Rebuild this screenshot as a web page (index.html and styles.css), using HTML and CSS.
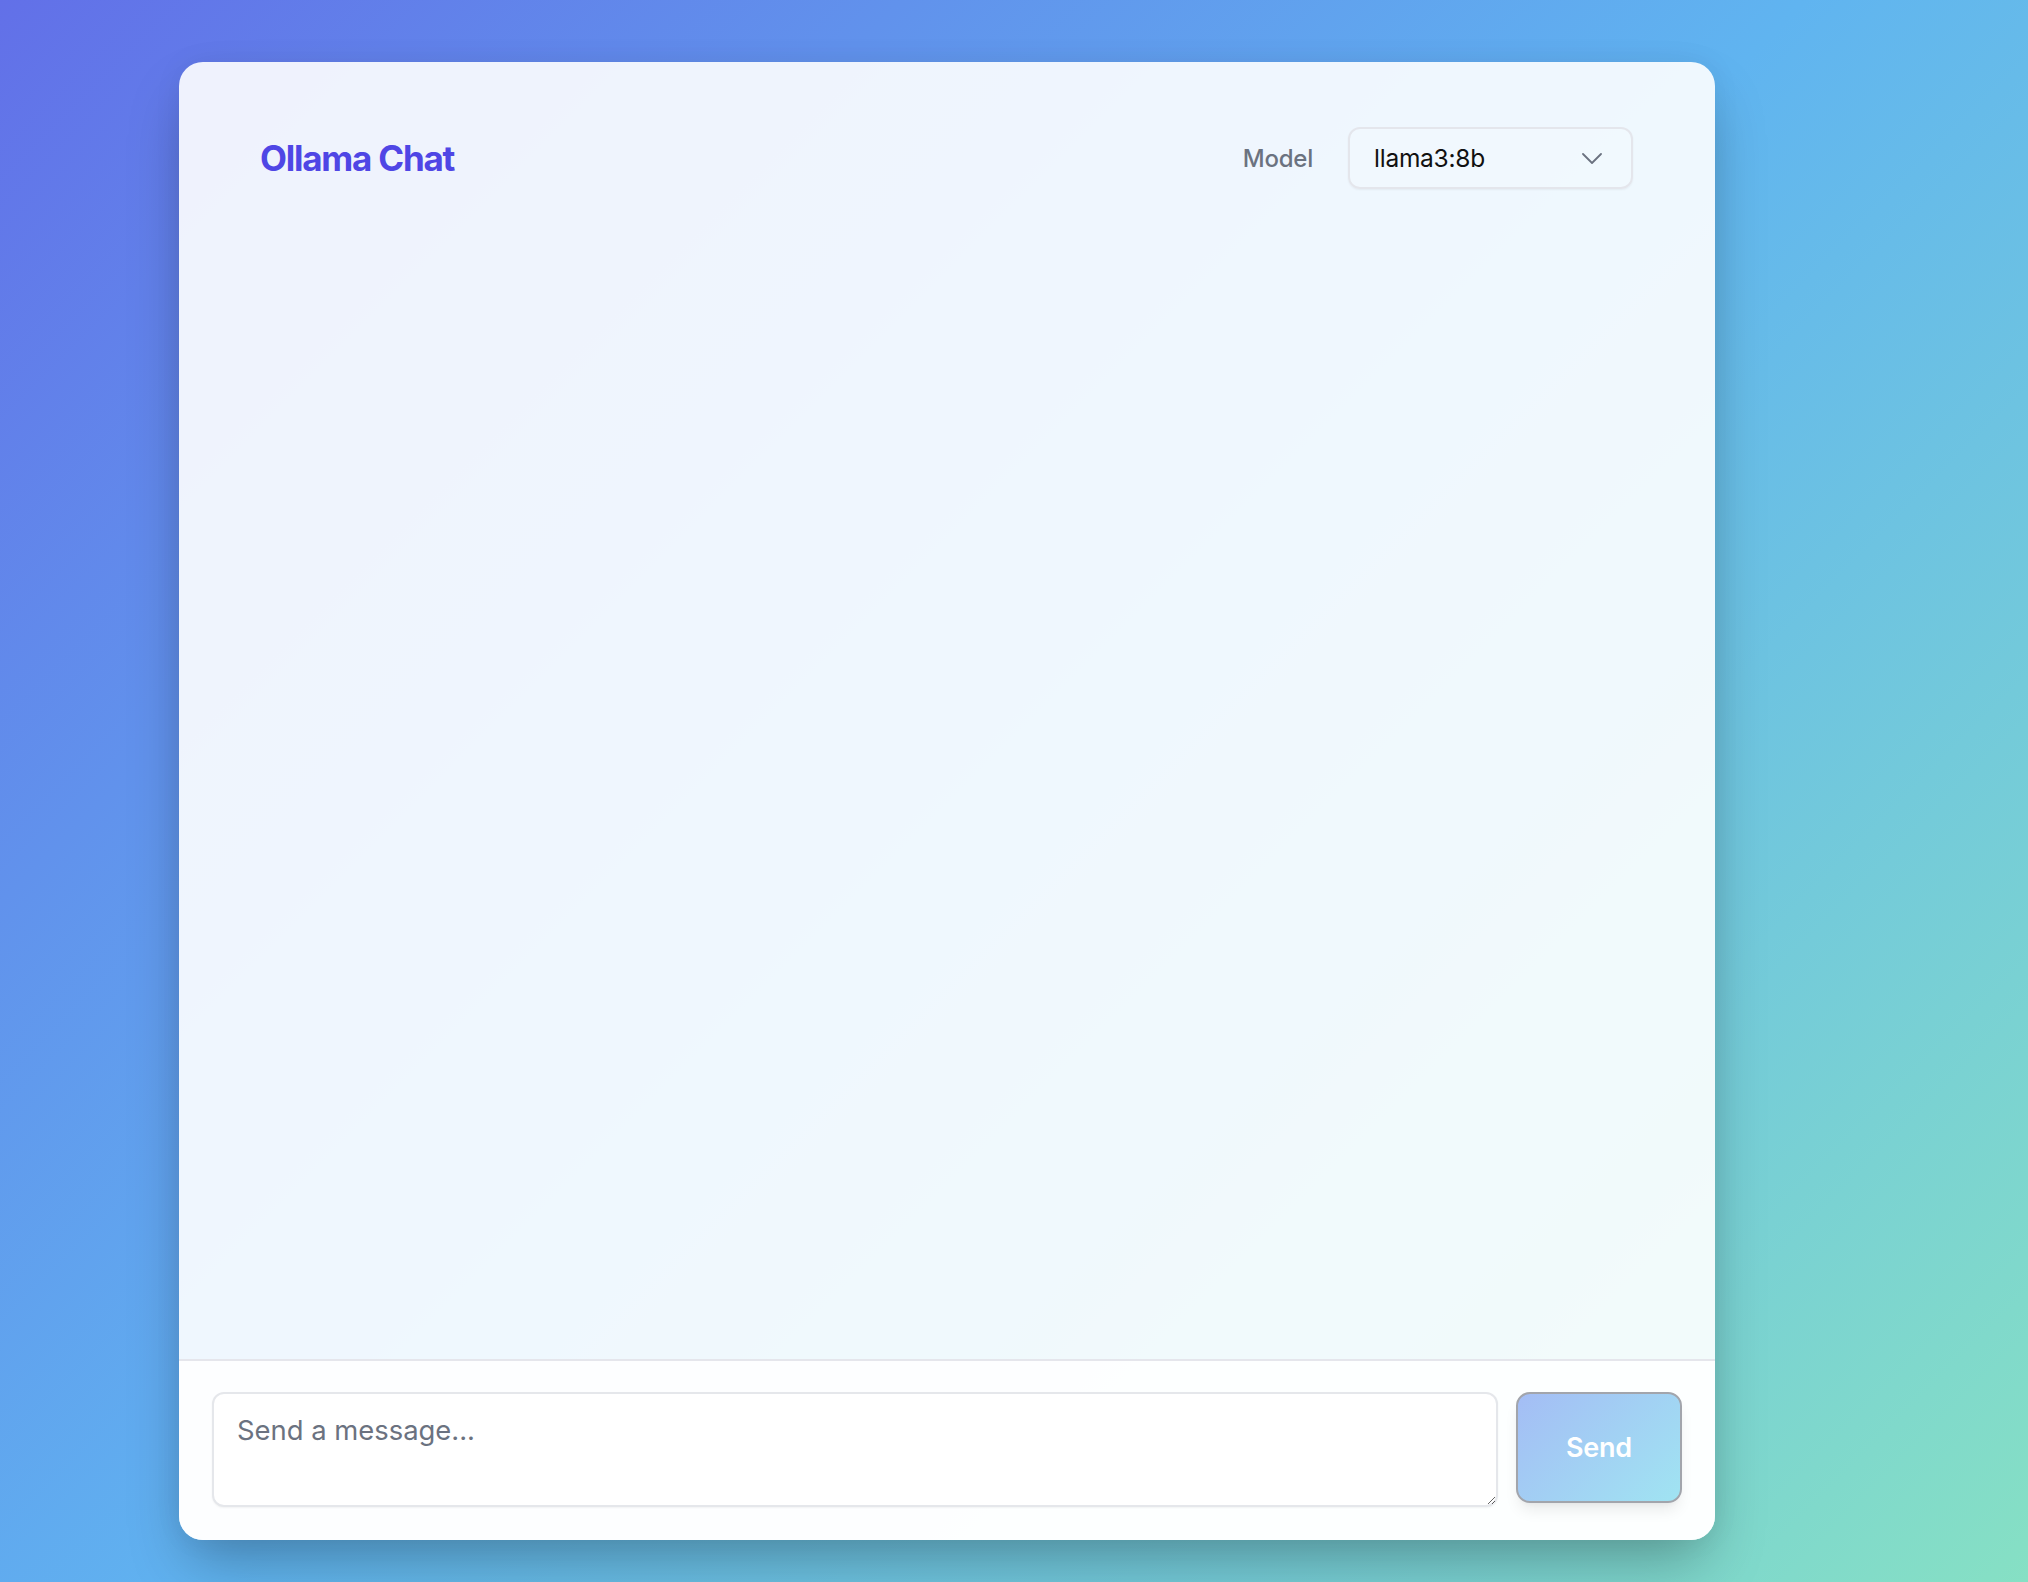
FILE: index.html
```html
<!DOCTYPE html>
<html lang="en">
<head>
<meta charset="utf-8">
<title>Ollama Chat</title>
<link rel="stylesheet" href="styles.css">
</head>
<body>
  <div class="card">
    <header class="header">
      <h1 class="title">Ollama Chat</h1>
      <div class="model">
        <span class="model-label">Model</span>
        <div class="select">
          <span class="select-value">llama3:8b</span>
          <svg class="chevron" width="20" height="11" viewBox="0 0 20 11"><polyline points="1,1 10,10 19,1" fill="none" stroke="#6b7280" stroke-width="1.8" stroke-linecap="round" stroke-linejoin="round"/></svg>
        </div>
      </div>
    </header>
    <main class="messages"></main>
    <footer class="composer">
      <textarea class="input" placeholder="Send a message..."></textarea>
      <button class="send" disabled>Send</button>
    </footer>
  </div>
</body>
</html>
```
FILE: styles.css
```css
html, body {
  margin: 0;
  padding: 0;
}
body {
  width: 2028px;
  height: 1582px;
  overflow: hidden;
  font-family: Inter, "Noto Sans", sans-serif;
  background: linear-gradient(135deg, #6270e8 0%, #60b4f0 50%, #86e0c4 100%);
}
.card {
  margin: 62px 0 0 179px;
  width: 1536px;
  height: 1478px;
  border-radius: 24px;
  background: rgba(255, 255, 255, 0.9);
  box-shadow: 0 30px 60px -10px rgba(0, 0, 0, 0.28), 0 0 30px rgba(0, 0, 0, 0.05);
  display: flex;
  flex-direction: column;
  overflow: hidden;
}
.header {
  display: flex;
  align-items: center;
  justify-content: space-between;
  padding: 65px 82px 0 81px;
}
.title {
  margin: 0;
  font-size: 35px;
  font-weight: 700;
  letter-spacing: -0.035em;
  color: #4f46e5;
  line-height: 62px;
}
.model {
  display: flex;
  align-items: center;
  gap: 35px;
}
.model-label {
  font-size: 24px;
  font-weight: 500;
  color: #6b7280;
  letter-spacing: -0.01em;
}
.select {
  box-sizing: border-box;
  width: 285px;
  height: 62px;
  border: 2px solid #e4e6ec;
  border-radius: 12px;
  background: rgba(255, 255, 255, 0.15);
  box-shadow: 0 1px 2px rgba(0, 0, 0, 0.05);
  display: flex;
  align-items: center;
  justify-content: space-between;
  padding: 0 29px 0 24px;
}
.select-value {
  font-size: 24.5px;
  color: #111;
  letter-spacing: -0.01em;
}
.chevron {
  display: block;
}
.messages {
  flex: 1;
}
.composer {
  border-top: 2px solid #e5e6ec;
  background: rgba(255, 255, 255, 0.85);
  padding: 31px 33px 33px;
  display: flex;
  align-items: flex-start;
  gap: 18px;
}
.input {
  box-sizing: border-box;
  flex: 1;
  height: 115px;
  margin: 0;
  border: 2px solid #e5e7eb;
  border-radius: 12px;
  background: #fff;
  box-shadow: 0 1px 2px rgba(0, 0, 0, 0.05);
  padding: 16px 23px 12px;
  font-family: Inter, "Noto Sans", sans-serif;
  font-size: 27.4px;
  line-height: 1.5;
  color: #111;
  outline: none;
}
.input::placeholder {
  color: #6b7280;
}
.send {
  box-sizing: border-box;
  width: 166px;
  height: 111px;
  margin: 0;
  border: 2px solid #a2a5ac;
  border-radius: 14px;
  background: linear-gradient(135deg, #a4bdf5 0%, #a0e4f2 100%);
  box-shadow: 0 10px 15px -3px rgba(0, 0, 0, 0.08), 0 4px 6px -4px rgba(0, 0, 0, 0.06);
  color: #fff;
  font-family: Inter, "Noto Sans", sans-serif;
  font-size: 27px;
  font-weight: 600;
  letter-spacing: -0.01em;
}
```
